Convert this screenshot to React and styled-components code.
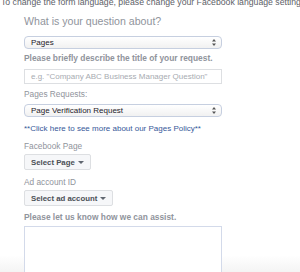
import React from "react";
import styled, { createGlobalStyle } from "styled-components";

const Global = createGlobalStyle`
  html, body {
    margin: 0;
    padding: 0;
    background: linear-gradient(to bottom, #ffffff 0px, #ffffff 255px, #f4f4f4 272px);
    height: 272px;
    overflow: hidden;
    font-family: "Liberation Sans", Arial, sans-serif;
  }
`;

const Page = styled.div`
  width: 300px;
  height: 272px;
  overflow: hidden;
`;

const Notice = styled.div`
  margin-top: -3px;
  padding-left: 1px;
  height: 10px;
  font-size: 8.7px;
  line-height: 10px;
  color: #5d6168;
  white-space: nowrap;
  overflow: hidden;
`;

const Form = styled.div`
  padding-left: 24px;
  width: 198px;
  display: flex;
  flex-direction: column;
`;

const Heading = styled.div`
  margin-top: 7px;
  font-size: 10.6px;
  line-height: 14px;
  color: #90949c;
`;

const Select = styled.div`
  margin-top: ${(p) => p.$top}px;
  height: 11px;
  border: 1px solid #c6cfe0;
  border-radius: 4px;
  background: linear-gradient(to bottom, #ffffff, #f1f1f1);
  display: flex;
  align-items: center;
  justify-content: space-between;
  padding: 0 5px 0 6px;
  font-size: 8px;
  color: #1d2129;
`;

const Arrows = styled.svg`
  width: 4px;
  height: 7px;
`;

const Label = styled.div`
  margin-top: ${(p) => p.$top}px;
  font-size: ${(p) => (p.$bold ? 8.4 : 8.3)}px;
  line-height: 9px;
  font-weight: ${(p) => (p.$bold ? 700 : 400)};
  color: #90949c;
`;

const Input = styled.div`
  margin-top: 6px;
  height: 13px;
  border: 1px solid #dddfe2;
  display: flex;
  align-items: center;
  padding-left: 6px;
  font-size: 8px;
  color: #a7abb1;
`;

const Link = styled.div`
  margin-top: 7px;
  font-size: 8px;
  line-height: 10px;
  color: #365899;
`;

const Button = styled.div`
  margin-top: 3px;
  align-self: flex-start;
  height: 14px;
  border: 1px solid #dddfe2;
  border-radius: 2px;
  background: #f6f7f9;
  display: flex;
  align-items: center;
  gap: 3px;
  padding: 0 6px;
  font-size: 7.8px;
  font-weight: 700;
  color: #4b4f56;
`;

const Caret = styled.span`
  width: 0;
  height: 0;
  border-left: 3px solid transparent;
  border-right: 3px solid transparent;
  border-top: 3px solid #606770;
`;

const TextArea = styled.div`
  margin-top: 4px;
  height: 60px;
  border: 1px solid #d3daea;
  border-bottom: none;
  background: #ffffff;
`;

const UpDown = () => (
  <Arrows viewBox="0 0 4 7">
    <path d="M2 0 L4 2.5 L0 2.5 Z M2 7 L4 4.5 L0 4.5 Z" fill="#555" />
  </Arrows>
);

export default function App() {
  return (
    <Page>
      <Global />
      <Notice>
        To change the form language, please change your Facebook language setting.
      </Notice>
      <Form>
        <Heading>What is your question about?</Heading>
        <Select $top={8}>
          <span>Pages</span>
          <UpDown />
        </Select>
        <Label $bold $top={5}>Please briefly describe the title of your request.</Label>
        <Input>e.g. "Company ABC Business Manager Question"</Input>
        <Label $top={6}>Pages Requests:</Label>
        <Select $top={5}>
          <span>Page Verification Request</span>
          <UpDown />
        </Select>
        <Link>**Click here to see more about our Pages Policy**</Link>
        <Label $top={8}>Facebook Page</Label>
        <Button>
          Select Page <Caret />
        </Button>
        <Label $top={8}>Ad account ID</Label>
        <Button>
          Select ad account <Caret />
        </Button>
        <Label $bold $top={7}>Please let us know how we can assist.</Label>
        <TextArea />
      </Form>
    </Page>
  );
}
